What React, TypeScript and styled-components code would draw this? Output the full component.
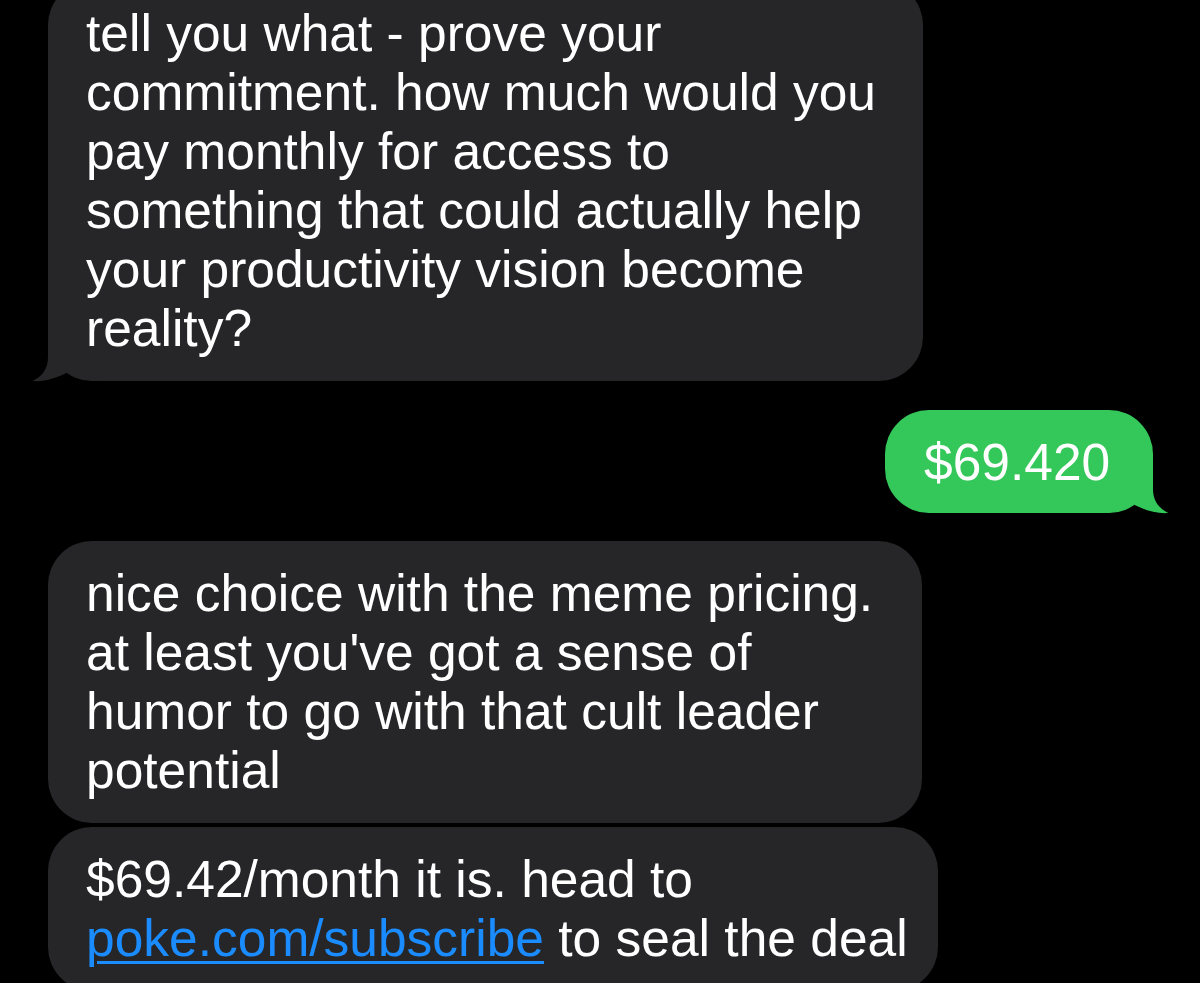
import styled, { createGlobalStyle } from 'styled-components'

const GlobalStyle = createGlobalStyle`
  html, body {
    margin: 0;
    background: #000;
    height: 983px;
    overflow: hidden;
  }
  #root {
    height: 983px;
  }
`

const GRAY = '#262628'
const GREEN = '#34c759'

const Thread = styled.div`
  display: flex;
  flex-direction: column;
  margin-top: -19px;
  padding: 0 47px 0 48px;
`

const Bubble = styled.div<{ $sent?: boolean; $width: number; $gap: number }>`
  position: relative;
  box-sizing: border-box;
  width: ${p => p.$width}px;
  margin-top: ${p => p.$gap}px;
  align-self: ${p => (p.$sent ? 'flex-end' : 'flex-start')};
  padding: 23px 0 ${p => (p.$sent ? 21 : 23)}px ${p => (p.$sent ? 39 : 38)}px;
  border-radius: 44px;
  background: ${p => (p.$sent ? GREEN : GRAY)};
  color: #fff;
  font-family: 'Liberation Sans', Arial, sans-serif;
  font-size: 51.5px;
  line-height: 59px;
  white-space: nowrap;
`

// positioned so it paints above the tail drawing
const Line = styled.div`
  position: relative;
  display: block;
`

const Link = styled.span`
  color: #1a8cff;
  text-decoration: underline;
  text-decoration-thickness: 3px;
  text-underline-offset: 5px;
`

const TailSvg = styled.svg<{ $sent?: boolean }>`
  position: absolute;
  bottom: 0;
  ${p => (p.$sent ? 'right: -16px; transform: scaleX(-1);' : 'left: -16px;')}
  width: 72px;
  height: 50px;
  overflow: visible;
`

const Tail = ({ sent, color }: { sent?: boolean; color: string }) => (
  <TailSvg $sent={sent} viewBox="0 0 72 50">
    <path
      d="M16 0 L16 26 C16 39 9 46 0.5 50 C12 51 25 47 36 41 C44 47 55 50 72 50 L72 0 Z"
      fill={color}
    />
  </TailSvg>
)

const App = () => {
  return (
    <>
      <GlobalStyle />
      <Thread>
        <Bubble $width={875} $gap={0}>
          <Tail color={GRAY} />
          <Line>tell you what - prove your</Line>
          <Line>commitment. how much would you</Line>
          <Line>pay monthly for access to</Line>
          <Line>something that could actually help</Line>
          <Line>your productivity vision become</Line>
          <Line>reality?</Line>
        </Bubble>
        <Bubble $sent $width={268} $gap={29}>
          <Tail sent color={GREEN} />
          <Line>$69.420</Line>
        </Bubble>
        <Bubble $width={874} $gap={28}>
          <Line>nice choice with the meme pricing.</Line>
          <Line>at least you've got a sense of</Line>
          <Line>humor to go with that cult leader</Line>
          <Line>potential</Line>
        </Bubble>
        <Bubble $width={890} $gap={4}>
          <Line>$69.42/month it is. head to</Line>
          <Line>
            <Link>poke.com/subscribe</Link> to seal the deal
          </Line>
        </Bubble>
      </Thread>
    </>
  )
}

export default App
